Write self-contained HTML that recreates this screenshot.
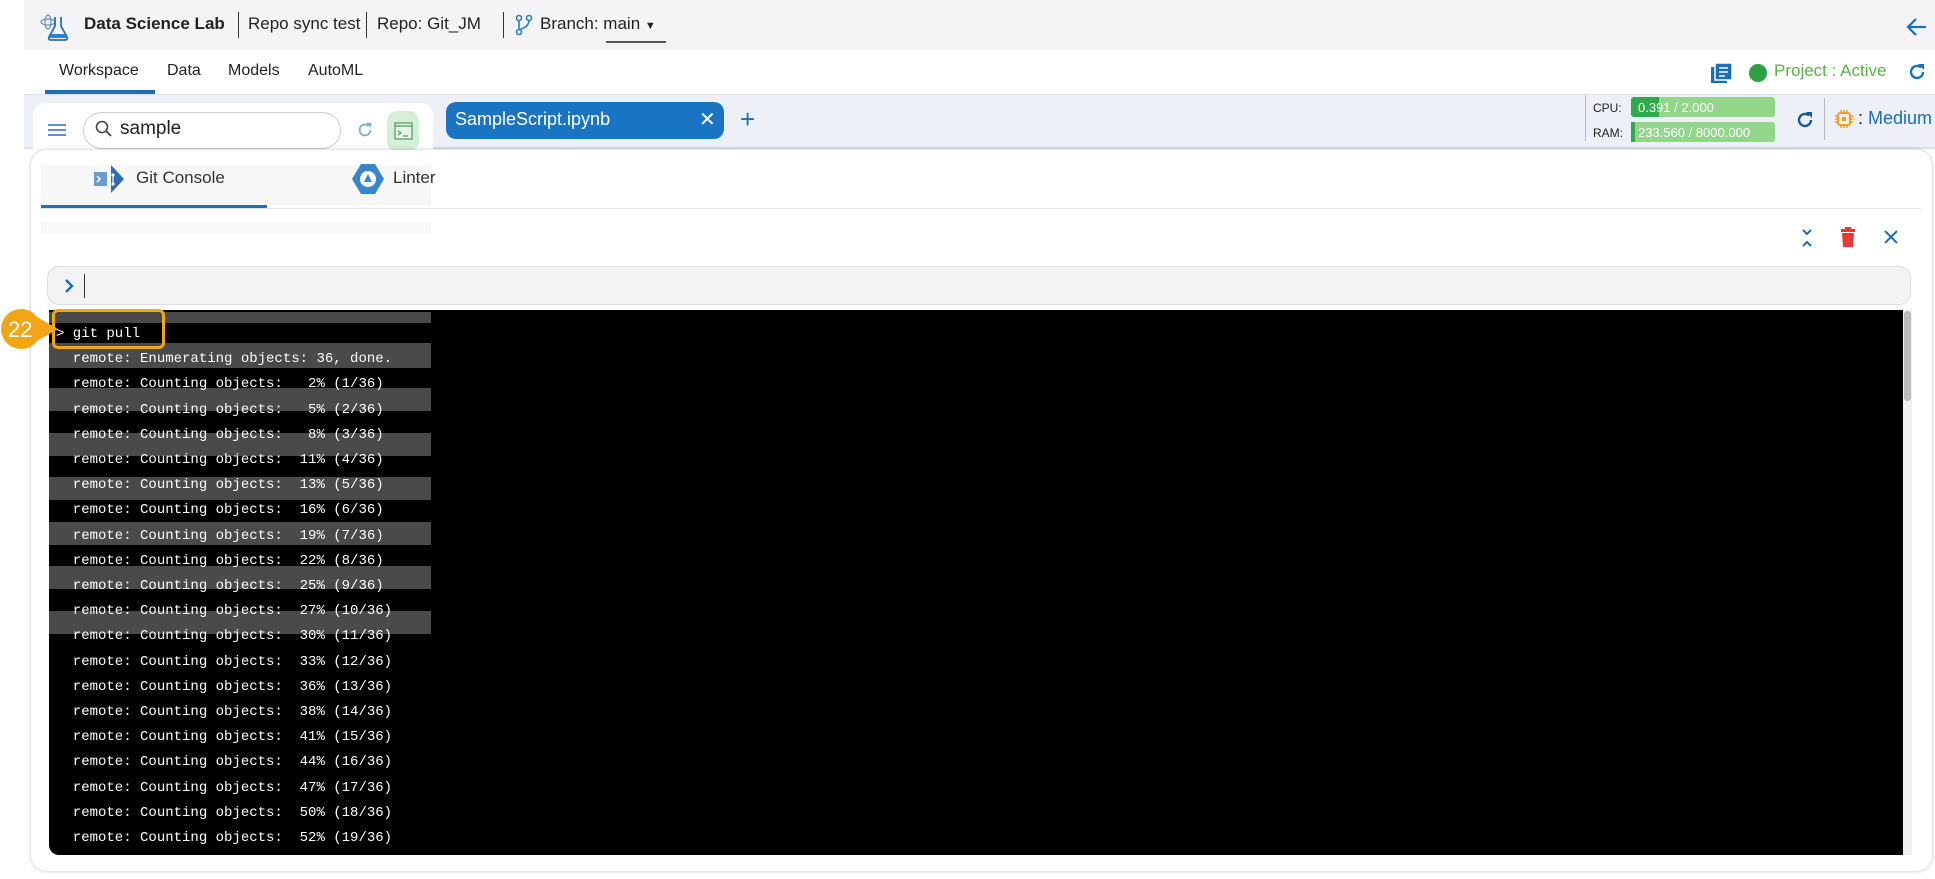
<!DOCTYPE html>
<html><head><meta charset="utf-8"><style>
*{margin:0;padding:0;box-sizing:border-box}
body{width:1935px;height:879px;position:relative;overflow:hidden;background:#fff;font-family:"Liberation Sans",sans-serif;color:#222}
.a{position:absolute}
.mono{font-family:"Liberation Mono",monospace;font-size:14px;color:#fff;white-space:pre}
</style></head><body>
<!-- top bar -->
<div class="a" style="left:24px;top:0;width:1911px;height:50px;background:#f4f4f6"></div>
<svg class="a" style="left:40px;top:12px" width="30" height="30" viewBox="0 0 30 30"><ellipse cx="8" cy="10" rx="7" ry="3" fill="none" stroke="#5a8fc8" stroke-width="1.2"/><ellipse cx="8" cy="10" rx="3" ry="7" fill="none" stroke="#5a8fc8" stroke-width="1.2"/><path d="M15 5v9l-6 11q-1 3 2 3h14q3 0 2-3l-6-11V5" fill="none" stroke="#2a6cb5" stroke-width="1.8"/><path d="M11 22h14l2 4H9z" fill="#2a85d0"/></svg>
<div class="a" style="left:84px;top:14px;font-size:17px;font-weight:bold">Data Science Lab</div>
<div class="a" style="left:238px;top:12px;width:1px;height:26px;background:#333"></div>
<div class="a" style="left:248px;top:14px;font-size:17px">Repo sync test</div>
<div class="a" style="left:366px;top:12px;width:1px;height:26px;background:#333"></div>
<div class="a" style="left:377px;top:14px;font-size:17px">Repo: Git_JM</div>
<div class="a" style="left:503px;top:12px;width:1px;height:26px;background:#333"></div>
<svg class="a" style="left:515px;top:14px" width="18" height="22" viewBox="0 0 18 22"><circle cx="4" cy="4" r="2.5" fill="none" stroke="#2a7bc8" stroke-width="1.6"/><circle cx="4" cy="18" r="2.5" fill="none" stroke="#2a7bc8" stroke-width="1.6"/><circle cx="14" cy="4" r="2.5" fill="none" stroke="#2a7bc8" stroke-width="1.6"/><path d="M4 6.5v9M14 6.5q0 6-9 9" fill="none" stroke="#2a7bc8" stroke-width="1.6"/></svg>
<div class="a" style="left:540px;top:14px;font-size:17px">Branch: main <span style="font-size:11px">▼</span></div>
<div class="a" style="left:606px;top:41px;width:60px;height:2px;background:#555"></div>
<svg class="a" style="left:1906px;top:16px" width="22" height="22" viewBox="0 0 22 22"><path d="M20 11H3M10 3l-8 8 8 8" fill="none" stroke="#1a6fc0" stroke-width="2.2"/></svg>
<!-- nav -->
<div class="a" style="left:59px;top:62px;font-size:16px">Workspace</div>
<div class="a" style="left:167px;top:62px;font-size:16px">Data</div>
<div class="a" style="left:228px;top:62px;font-size:16px">Models</div>
<div class="a" style="left:308px;top:62px;font-size:16px">AutoML</div>
<div class="a" style="left:45px;top:90px;width:110px;height:4px;background:#1a6fb8"></div>
<svg class="a" style="left:1710px;top:62px" width="24" height="22" viewBox="0 0 24 22"><rect x="1" y="5" width="16" height="16" fill="#1a6fb8"/><rect x="5" y="1" width="17" height="17" fill="#1a6fb8" stroke="#fff" stroke-width="1.5"/><path d="M9 6h9M9 10h9M9 14h6" stroke="#fff" stroke-width="1.6"/></svg>
<div class="a" style="left:1749px;top:64px;width:18px;height:18px;border-radius:50%;background:#2ea043"></div>
<div class="a" style="left:1774px;top:61px;font-size:17px;color:#5ab14a">Project : Active</div>
<svg class="a" style="left:1907px;top:62px" width="20" height="20" viewBox="0 0 20 20"><path d="M16 10a6 6 0 1 1-2-4.5" fill="none" stroke="#1a6fb8" stroke-width="2.4"/><path d="M11 2h6v6z" fill="#1a6fb8"/></svg>
<!-- content bg -->
<div class="a" style="left:24px;top:94px;width:1911px;height:53px;background:#eef0f8;border-top:1px solid #dde0ea"></div>
<div class="a" style="left:24px;top:147px;width:1911px;height:2px;background:#dcdfe7"></div>
<div class="a" style="left:33px;top:103px;width:400px;height:60px;background:#fff;border-radius:12px"></div>
<div class="a" style="left:48px;top:124px;width:18px;height:2px;background:#6a8fc8;box-shadow:0 5px 0 #6a8fc8,0 10px 0 #6a8fc8"></div>
<div class="a" style="left:83px;top:112px;width:258px;height:37px;border:1px solid #ccc;border-radius:19px;background:#fff"></div>
<svg class="a" style="left:95px;top:120px" width="18" height="18" viewBox="0 0 18 18"><circle cx="7" cy="7" r="5.5" fill="none" stroke="#444" stroke-width="1.6"/><path d="M11 11l5 5" stroke="#444" stroke-width="1.8"/></svg>
<div class="a" style="left:120px;top:118px;font-size:19px">sample</div>
<svg class="a" style="left:356px;top:121px" width="18" height="18" viewBox="0 0 20 20"><path d="M16 10a6 6 0 1 1-2-4.5" fill="none" stroke="#8ab0d8" stroke-width="2.2"/><path d="M11 2h6v6z" fill="#8ab0d8"/></svg>
<div class="a" style="left:387px;top:111px;width:32px;height:40px;background:#d6f0d8;border-radius:10px"></div>
<svg class="a" style="left:394px;top:122px" width="19" height="18" viewBox="0 0 19 18"><rect x="1" y="1" width="17" height="16" fill="#e8f5e8" stroke="#4a9a5a" stroke-width="1.2"/><path d="M1 4h17M4 9l3 2-3 2M9 14h5" fill="none" stroke="#4a9a5a" stroke-width="1.2"/></svg>
<div class="a" style="left:446px;top:102px;width:278px;height:37px;background:#1a74c4;border-radius:10px"></div>
<div class="a" style="left:455px;top:109px;font-size:18px;color:#fff">SampleScript.ipynb</div>
<div class="a" style="left:699px;top:107px;font-size:20px;color:#fff">✕</div>
<div class="a" style="left:740px;top:104px;font-size:26px;color:#1a6fb8">+</div>
<div class="a" style="left:1585px;top:95px;width:1px;height:46px;background:#bbb"></div>
<div class="a" style="left:1593px;top:101px;font-size:12px">CPU:</div>
<div class="a" style="left:1593px;top:126px;font-size:12px">RAM:</div>
<div class="a" style="left:1631px;top:97px;width:144px;height:20px;background:#92d68a;border-radius:3px"></div>
<div class="a" style="left:1631px;top:97px;width:28px;height:20px;background:#2eaa4a;border-radius:3px 0 0 3px"></div>
<div class="a" style="left:1638px;top:100px;font-size:13px;color:#fff">0.391 / 2.000</div>
<div class="a" style="left:1631px;top:122px;width:144px;height:20px;background:#92d68a;border-radius:3px"></div>
<div class="a" style="left:1631px;top:122px;width:4px;height:20px;background:#2eaa4a"></div>
<div class="a" style="left:1638px;top:125px;font-size:13px;color:#fff">233.560 / 8000.000</div>
<svg class="a" style="left:1795px;top:110px" width="20" height="20" viewBox="0 0 20 20"><path d="M16 10a6 6 0 1 1-2-4.5" fill="none" stroke="#1a5a98" stroke-width="2.4"/><path d="M11 2h6v6z" fill="#1a5a98"/></svg>
<div class="a" style="left:1824px;top:98px;width:1px;height:42px;background:#bbb"></div>
<svg class="a" style="left:1834px;top:109px" width="20" height="20" viewBox="0 0 20 20"><rect x="4" y="4" width="12" height="12" rx="2" fill="none" stroke="#f0a020" stroke-width="2"/><rect x="8" y="8" width="4" height="4" fill="#f0a020"/><path d="M7 1v3M10 1v3M13 1v3M7 16v3M10 16v3M13 16v3M1 7h3M1 10h3M1 13h3M16 7h3M16 10h3M16 13h3" stroke="#f0a020" stroke-width="1.5"/></svg>
<div class="a" style="left:1858px;top:108px;font-size:18px;color:#1a6fb8"><span style="color:#222">:</span> Medium</div>
<!-- modal -->
<div class="a" style="left:31px;top:150px;width:1901px;height:721px;background:#fff;border-radius:16px;box-shadow:0 0 4px rgba(0,0,0,.25)"></div>
<div class="a" style="left:41px;top:165px;width:390px;height:40px;background:#f7f7f8"></div>
<svg class="a" style="left:93px;top:163px" width="32" height="32" viewBox="0 0 32 32"><rect x="1" y="9" width="13" height="14" fill="#6a9ad0"/><path d="M4 13l3 3-3 3" stroke="#fff" fill="none" stroke-width="1.5"/><path d="M18 2l13 14-13 14z" fill="#2d6cb0"/><circle cx="20" cy="12" r="1.6" fill="#fff"/><circle cx="20" cy="21" r="1.6" fill="#fff"/><path d="M20 12v9" stroke="#fff" stroke-width="1.2"/></svg>
<div class="a" style="left:136px;top:168px;font-size:17px;color:#333">Git Console</div>
<svg class="a" style="left:351px;top:162px" width="34" height="34" viewBox="0 0 34 34"><path d="M10 2h14l9 15-9 15H10L1 17z" fill="#3a86cc"/><circle cx="17" cy="17" r="8" fill="#fff"/><path d="M17 12l4 8h-8z" fill="#3a86cc"/></svg>
<div class="a" style="left:393px;top:168px;font-size:17px;color:#333">Linter</div>
<div class="a" style="left:41px;top:205px;width:226px;height:3px;background:#1a6fb8"></div>
<div class="a" style="left:41px;top:208px;width:1880px;height:1px;background:#e4e4e4"></div>
<div class="a" style="left:41px;top:222px;width:390px;height:12px;background:#f8f8f9"></div>
<svg class="a" style="left:1800px;top:228px" width="14" height="20" viewBox="0 0 14 20"><path d="M3 2l4 4 4-4M3 18l4-4 4 4" fill="none" stroke="#1a6fb8" stroke-width="2"/></svg>
<svg class="a" style="left:1840px;top:227px" width="16" height="20" viewBox="0 0 16 20"><rect x="1" y="2" width="14" height="3" fill="#e53935"/><rect x="5" y="0" width="6" height="3" fill="#e53935"/><path d="M2 6h12l-1 14H3z" fill="#e53935"/></svg>
<svg class="a" style="left:1883px;top:229px" width="16" height="16" viewBox="0 0 16 16"><path d="M2 2l12 12M14 2L2 14" stroke="#1a6fb8" stroke-width="2"/></svg>
<div class="a" style="left:47px;top:266px;width:1864px;height:39px;background:#f3f3f5;border:1px solid #ddd;border-radius:12px"></div>
<svg class="a" style="left:64px;top:278px" width="12" height="16" viewBox="0 0 12 16"><path d="M2 2l6 6-6 6" fill="none" stroke="#1a6fb8" stroke-width="2.4"/></svg>
<div class="a" style="left:84px;top:274px;width:1px;height:24px;background:#333"></div>
<!-- terminal -->
<div class="a" style="left:49px;top:310px;width:1854px;height:545px;background:#000;border-radius:0 0 0 10px;overflow:hidden">
<div style="position:absolute;left:0;top:2px;width:382px;height:11px;background:#4a4a4a"></div>
<div style="position:absolute;left:0;top:33px;width:382px;height:25px;background:#4a4a4a"></div>
<div style="position:absolute;left:0;top:78px;width:382px;height:23px;background:#4a4a4a"></div>
<div style="position:absolute;left:0;top:123px;width:382px;height:23px;background:#4a4a4a"></div>
<div style="position:absolute;left:0;top:167px;width:382px;height:23px;background:#4a4a4a"></div>
<div style="position:absolute;left:0;top:212px;width:382px;height:23px;background:#4a4a4a"></div>
<div style="position:absolute;left:0;top:256px;width:382px;height:23px;background:#4a4a4a"></div>
<div style="position:absolute;left:0;top:301px;width:382px;height:23px;background:#4a4a4a"></div>
</div>
<div class="a" style="left:1903px;top:310px;width:9px;height:545px;background:#f0f0f0"></div>
<div class="a" style="left:1904px;top:311px;width:7px;height:90px;background:#bbb;border-radius:3px"></div>
<div class="a mono" style="left:56px;top:322px;line-height:25.2px">&gt; git pull
  remote: Enumerating objects: 36, done.
  remote: Counting objects:   2% (1/36)
  remote: Counting objects:   5% (2/36)
  remote: Counting objects:   8% (3/36)
  remote: Counting objects:  11% (4/36)
  remote: Counting objects:  13% (5/36)
  remote: Counting objects:  16% (6/36)
  remote: Counting objects:  19% (7/36)
  remote: Counting objects:  22% (8/36)
  remote: Counting objects:  25% (9/36)
  remote: Counting objects:  27% (10/36)
  remote: Counting objects:  30% (11/36)
  remote: Counting objects:  33% (12/36)
  remote: Counting objects:  36% (13/36)
  remote: Counting objects:  38% (14/36)
  remote: Counting objects:  41% (15/36)
  remote: Counting objects:  44% (16/36)
  remote: Counting objects:  47% (17/36)
  remote: Counting objects:  50% (18/36)
  remote: Counting objects:  52% (19/36)</div>
<!-- annotation -->
<div class="a" style="left:52px;top:309px;width:113px;height:40px;border:3px solid #f2a516;border-radius:6px"></div>
<svg class="a" style="left:0;top:308px" width="60" height="42" viewBox="0 0 60 42"><path d="M21 1a20 20 0 1 0 0 40q10 0 16-8l21-12-21-12Q31 1 21 1z" fill="#f2a516"/><text x="8" y="29" font-family="Liberation Sans" font-size="22" fill="#fff">22</text></svg>
</body></html>
